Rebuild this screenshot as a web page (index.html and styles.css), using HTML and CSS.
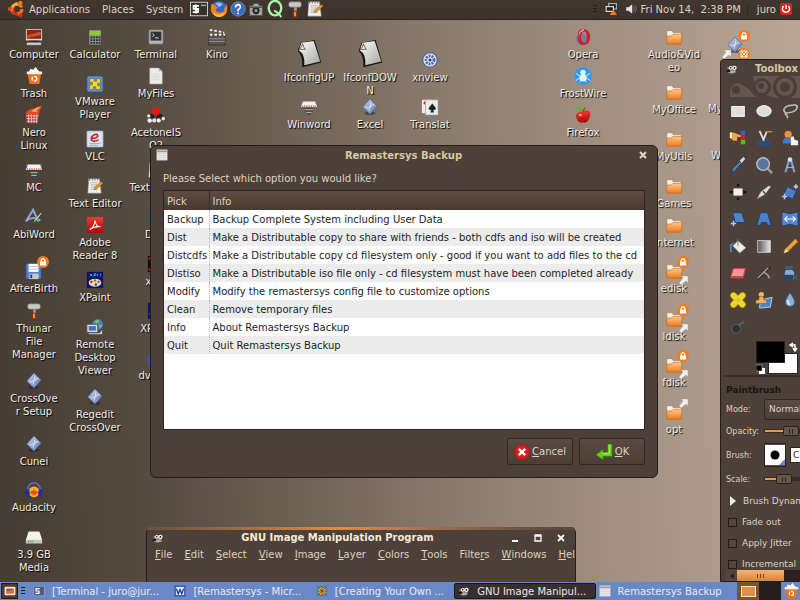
FILE: index.html
```html
<!DOCTYPE html>
<html lang="en">
<head>
<meta charset="utf-8">
<title>Desktop</title>
<link rel="stylesheet" href="styles.css">
</head>
<body>
<svg class="defs" aria-hidden="true">
<defs>
<linearGradient id="g-orange" x1="0" y1="0" x2="0" y2="1"><stop offset="0" stop-color="#ffc98f"/><stop offset="1" stop-color="#ee7a1c"/></linearGradient>
<linearGradient id="g-paper" x1="0" y1="0" x2="1" y2="1"><stop offset="0" stop-color="#fff"/><stop offset="1" stop-color="#a4a4a0"/></linearGradient>
<linearGradient id="g-blue" x1="0" y1="0" x2="1" y2="1"><stop offset="0" stop-color="#c8d8f4"/><stop offset="1" stop-color="#5a76ac"/></linearGradient>
<linearGradient id="g-red" x1="0" y1="0" x2="0" y2="1"><stop offset="0" stop-color="#f03a30"/><stop offset="1" stop-color="#a80808"/></linearGradient>
<linearGradient id="g-grey" x1="0" y1="0" x2="1" y2="0"><stop offset="0" stop-color="#555"/><stop offset="1" stop-color="#e8e8e8"/></linearGradient>
<symbol id="i-computer" viewBox="0 0 20 20"><rect x="1" y="1" width="18" height="13" rx="1" fill="#ddd9d2"/><rect x="2" y="2" width="16" height="10" fill="#8c2410"/><path d="M2 8l16-4v4L2 11z" fill="#c8502c"/><path d="M4 14h12v2H4z" fill="#333"/><rect x="2" y="16" width="16" height="3" fill="#d4d2cc" stroke="#555" stroke-width=".6"/></symbol>
<symbol id="i-trash" viewBox="0 0 20 20"><path d="M4 6l2-4 3 1 3-3 2 3 3 3z" fill="#fff"/><path d="M3 7h15l-2 12H5z" fill="#ee741c"/><path d="M2 5h17v3H2z" fill="#f6efe8"/><circle cx="10.500" cy="13" r="2.600" fill="none" stroke="#fff" stroke-width="1.500" stroke-dasharray="4 1.400"/></symbol>
<symbol id="i-nero" viewBox="0 0 20 20"><path d="M1 8Q5 2 10 3q4-3 9-3-2 3-3 6 0 2-1 5l-2 3H3z" fill="#e8481c"/><path d="M7 6q4-5 10-5-4 3-4 6z" fill="#ffa060"/><path d="M1 9h14l-1 10H2z" fill="#a83838"/><path d="M1 11h14M1.500 14h13M2 17h12M4 9v10M7 9v10M10 9v10M13 9v10" stroke="#f0c8c0" stroke-width="1"/></symbol>
<symbol id="i-press" viewBox="0 0 20 20"><path d="M3 4h14l2 6H1z" fill="#f4f2f0"/><path d="M2 9h16" stroke="#d04030" stroke-width="1.500" stroke-dasharray="1.500 1"/><path d="M2 3v3M18 3v3" stroke="#5078c0" stroke-width="1.500"/><path d="M6 11h8v5l-4 3-4-3z" fill="#444"/><path d="M6 13h8M7 16h6" stroke="#ccc"/></symbol>
<symbol id="i-abi" viewBox="0 0 20 20"><path d="M1 15L9 2l6 13M2 14q7-6 15 0" fill="none" stroke="#88a8d8" stroke-width="2.200"/><path d="M9 17l3-6 7-7-5 9z" fill="#5cb038"/><path d="M11 14l7-8" stroke="#d8f0c0"/></symbol>
<symbol id="i-floppy" viewBox="0 0 20 20"><rect x="1" y="2" width="17" height="17" rx="1" fill="#5484cc" stroke="#284c88"/><rect x="4" y="2" width="11" height="9" fill="#fff"/><path d="M4 5h11M4 8h11" stroke="#aab" stroke-width=".8"/><rect x="5" y="13" width="10" height="6" fill="#c8ccd0"/><rect x="6" y="14" width="2" height="4" fill="#333"/></symbol>
<symbol id="i-hammer" viewBox="0 0 20 20"><rect x="3" y="2" width="14" height="6" rx="2" fill="#c8c8c4" stroke="#666" stroke-width=".7"/><path d="M9 8h3v5H9z" fill="#999"/><path d="M8 12h5v6l-2 2-3-2z" fill="#8c3010"/><path d="M9 13h2v5H9z" fill="#e8a040"/></symbol>
<symbol id="i-crystal" viewBox="0 0 20 20"><ellipse cx="10" cy="17" rx="6" ry="2" fill="#222" opacity=".5"/><path d="M10 1l8 8-8 9-8-8z" fill="url(#g-blue)" stroke="#4a5f90" stroke-width=".7"/><path d="M6 11q5 0 5-6M9 14q0-5 6-7" fill="none" stroke="#eef3fc" stroke-width="1"/></symbol>
<symbol id="i-audacity" viewBox="0 0 20 20"><circle cx="10" cy="12" r="6" fill="#ffb41c"/><path d="M4 13h3l1-1 1 2 1-3 1 3 1-2 1 1h3" stroke="#f04818" stroke-width="2" fill="none"/><path d="M3 12V8q2-6 7-6t7 6v4" fill="none" stroke="#5868c0" stroke-width="2"/><rect x="1" y="9" width="4" height="9" rx="2" fill="#2030a8"/><rect x="15" y="9" width="4" height="9" rx="2" fill="#2030a8"/></symbol>
<symbol id="i-drive" viewBox="0 0 20 20"><path d="M4 4h12l3 9v4H1v-4z" fill="#f4f4f2"/><path d="M1 13h18v4H1z" fill="#c4c4c0"/><path d="M4 14v2M6 14v2M8 14v2" stroke="#58a820"/></symbol>
<symbol id="i-calc" viewBox="0 0 20 20"><rect x="3" y="2" width="14" height="17" rx="1" fill="#8a8c84" stroke="#333" stroke-width=".6"/><rect x="4" y="3" width="12" height="5" fill="#84d030"/><path d="M5 10.500h11M5 13.500h11M5 16.500h11" stroke="#2c302c" stroke-width="2" stroke-dasharray="2 1"/></symbol>
<symbol id="i-vmware" viewBox="0 0 20 20"><rect x="1" y="1" width="18" height="18" rx="2" fill="#5c90d0" stroke="#2c5490"/><path d="M4 4h5v3h3V4h4v5h-3v3h3v4h-5v-3H8v3H4v-5h3V8H4z" fill="#f4d840" stroke="#806010" stroke-width=".7"/></symbol>
<symbol id="i-vlc" viewBox="0 0 20 20"><rect x="1" y="1" width="18" height="18" rx="1" fill="#d4e4f4" stroke="#88a4c4" stroke-width=".7"/><path d="M6 9q5 1 7-2 0-3-3-2-5 2-4 6 2 3 8 0" fill="none" stroke="#d81818" stroke-width="1.700"/><path d="M4 15h12M4 17h9" stroke="#99a8bc"/></symbol>
<symbol id="i-editor" viewBox="0 0 20 20"><path d="M3 2h12l2 16H2z" fill="#f0f0ec" stroke="#888" stroke-width=".6"/><path d="M5 6h8M5 8h9M5 10h7M5 12h7M5 14h8" stroke="#aaa" stroke-width=".8"/><path d="M4 1v3M7 1v3M10 1v3M13 1v3" stroke="#666"/><path d="M9 14l1-3 7-6 2 2-7 6z" fill="#f0941c" stroke="#8c4c10" stroke-width=".5"/></symbol>
<symbol id="i-adobe" viewBox="0 0 20 20"><rect x="1" y="1" width="18" height="18" fill="url(#g-red)"/><path d="M4 15q5-2 6-10 1 7 6 7-7-1-12 3" fill="none" stroke="#fff" stroke-width="1.200"/></symbol>
<symbol id="i-xpaint" viewBox="0 0 20 20"><rect x="1" y="1" width="18" height="18" fill="#10106c"/><path d="M4 3l3 3M7 3L4 6M9 6V3h2v2H9M13 6V3M16 3v3" stroke="#28b8d8" fill="none"/><ellipse cx="10" cy="13" rx="7" ry="4.500" fill="#e8d8a8"/><circle cx="6" cy="12" r="1.300" fill="#d02020"/><circle cx="10" cy="10.500" r="1.300" fill="#30a030"/><circle cx="14" cy="12" r="1.300" fill="#a040c0"/><circle cx="11" cy="15" r="1.300" fill="#2040c0"/></symbol>
<symbol id="i-remote" viewBox="0 0 20 20"><circle cx="13" cy="7" r="6" fill="#4880c8"/><path d="M10 3q4-2 5 1l-4 3zM14 7l4 1-2 4z" fill="#80c060"/><rect x="1" y="7" width="12" height="9" fill="#d8dce4" stroke="#556"/><rect x="3" y="9" width="8" height="5" fill="#4474b8"/><path d="M3 17h12l3-4v5H3z" fill="#c8ccd0"/></symbol>
<symbol id="i-terminal" viewBox="0 0 20 20"><rect x="2" y="2" width="16" height="16" rx="1" fill="#b4b8b0" stroke="#555" stroke-width=".7"/><rect x="4" y="4" width="12" height="10" fill="#2c3438"/><path d="M6 6l2 2-2 2M9 11h4" fill="none" stroke="#e8e8e8"/></symbol>
<symbol id="i-file" viewBox="0 0 20 20"><path d="M3 1h10l4 4v14H3z" fill="#ececea" stroke="#999" stroke-width=".6"/><path d="M13 1v4h4z" fill="#bbb"/><path d="M5 8h9M5 10h9M5 12h9M5 14h9" stroke="#d4d4d2" stroke-width=".8"/></symbol>
<symbol id="i-molecule" viewBox="0 0 20 20"><circle cx="5" cy="12" r="3.500" fill="#222"/><circle cx="14" cy="12" r="3.500" fill="#222"/><circle cx="10" cy="6" r="4.500" fill="#e01818"/><circle cx="3" cy="16" r="2.500" fill="#eee"/><circle cx="8" cy="16" r="2.300" fill="#ddd"/><circle cx="13" cy="16" r="2.300" fill="#eee"/><circle cx="18" cy="14" r="2" fill="#eee"/><circle cx="2" cy="11" r="1.800" fill="#eee"/></symbol>
<symbol id="i-clapper" viewBox="0 0 20 20"><rect x="1" y="8" width="18" height="11" fill="#55534f" stroke="#222" stroke-width=".6"/><path d="M1 12h18M1 15h18" stroke="#99958c"/><path d="M2 7.500h17" stroke="#eee" stroke-width="2" stroke-dasharray="3 2"/><path d="M2 2l16 3" stroke="#eee" stroke-width="2" stroke-dasharray="3 2"/></symbol>
<symbol id="i-sheet" viewBox="0 0 32 32"><path d="M7 4l15-3 7 24-20 5q0-14-5-17z" fill="#151515"/><path d="M8 4l13-2 7 22-17 4q1-12-6-16z" fill="url(#g-paper)"/><path d="M4 11q4 0 5-6 1 4 3 6z" fill="#f4f4f4" stroke="#222" stroke-width=".7"/></symbol>
<symbol id="i-xnview" viewBox="0 0 20 20"><circle cx="10" cy="10" r="8" fill="#dbe2f2" stroke="#3c5498"/><circle cx="10" cy="10" r="4.500" fill="none" stroke="#4a64a8" stroke-width="3" stroke-dasharray="2 1.200"/><circle cx="10" cy="10" r="1.700" fill="#2c4488"/></symbol>
<symbol id="i-cards" viewBox="0 0 20 20"><rect x="1" y="2" width="12" height="15" rx="1" fill="#f6eaea"/><path d="M3 4h2v3H3z" fill="#d82020"/><rect x="5" y="2" width="14" height="17" rx="1" fill="#ececec" stroke="#888" stroke-width=".6"/><path d="M12.500 6l4 5q0 3-3 2l1 3h-4l1-3q-3 1-3-2z" fill="#182420"/></symbol>
<symbol id="i-opera" viewBox="0 0 20 20"><ellipse cx="8" cy="12" rx="6" ry="6" fill="#5c6cb0" opacity=".5"/><path fill-rule="evenodd" d="M11 1q7 1 7 9t-7 9-7-9 7-9zm0 3q-3 1-3 6t3 6 3-6-3-6z" fill="#c02838"/><path d="M11 1q-6 1-6 9 1-6 6-7z" fill="#f0a0a0"/></symbol>
<symbol id="i-frost" viewBox="0 0 20 20"><circle cx="10" cy="10" r="10" fill="#3098f0"/><circle cx="10" cy="6" r="3" fill="#e8f4ff"/><ellipse cx="10" cy="12" rx="4" ry="4" fill="#e8f4ff"/><path d="M2 7l6 4-6 4M18 7l-6 4 6 4M6 17l3-4M14 17l-3-4" fill="none" stroke="#e8f4ff" stroke-width="1"/></symbol>
<symbol id="i-apple" viewBox="0 0 20 20"><path d="M10 6q5-3 8 1 1 6-4 11-4 1-4 0-5 2-7-4-3-8 7-8z" fill="url(#g-red)"/><path d="M10 6Q5 6 3 1q6 0 7 5z" fill="#58b820"/><path d="M10 6l2-4" stroke="#604010"/><ellipse cx="7" cy="10" rx="2" ry="1.500" fill="#ff9a90"/></symbol>
<symbol id="i-folder" viewBox="0 0 20 20"><path d="M2 3h6l1 2h9v12H2z" fill="#f7eee4" stroke="#a87c54" stroke-width=".7"/><path d="M2 9h5l2-2h10l-1 11H2z" fill="url(#g-orange)" stroke="#c4641c" stroke-width=".7"/></symbol>
<symbol id="i-globe" viewBox="0 0 20 20"><circle cx="10" cy="10" r="9" fill="#2c5470"/></symbol>
<symbol id="i-film" viewBox="0 0 20 20"><rect x="1" y="1" width="18" height="18" fill="#180808"/><path d="M2 3l16 14M18 3L2 17" stroke="#d02818" stroke-width="2"/></symbol>
<symbol id="i-dvd" viewBox="0 0 20 20"><path d="M1 9l9-7 9 7v10H1z" fill="#3c50b8"/><path d="M4 12h5M4 15h5" stroke="#fff" stroke-width="2"/></symbol>
<symbol id="i-lock" viewBox="0 0 12 12"><circle cx="6" cy="6" r="6" fill="#f47c20"/><rect x="3" y="5.500" width="6" height="4" fill="#fff"/><path d="M4.200 6V4q1.800-2.600 3.600 0v2" fill="none" stroke="#fff" stroke-width="1.200"/></symbol>
<symbol id="i-link" viewBox="0 0 12 12"><path d="M4 2h7v7L9 7l-5 4-2-2 4-5z" fill="#f4f2ee" stroke="#999" stroke-width=".5"/></symbol>
<symbol id="i-stop" viewBox="0 0 12 12"><circle cx="6" cy="6" r="6" fill="#f47c20"/><path d="M3 3h6v6H3zM3 3l6 6M9 3L3 9" fill="none" stroke="#fff"/></symbol>
<symbol id="i-ubuntu" viewBox="0 0 20 20"><circle cx="11" cy="10" r="5.500" fill="none" stroke="#f07818" stroke-width="3.600" stroke-dasharray="9 2.500"/><path d="M6 8q2-4 6-3.600" fill="none" stroke="#f8b020" stroke-width="3"/><path d="M6 12q2 4 6 3.600" fill="none" stroke="#d83010" stroke-width="3"/><circle cx="3" cy="10" r="2.200" fill="#e84818"/><circle cx="15" cy="3" r="2.200" fill="#f07818"/><circle cx="15" cy="17" r="2.200" fill="#d83010"/></symbol>
<symbol id="i-shell" viewBox="0 0 20 20"><rect x="0" y="2" width="20" height="16" fill="#d8d8d4"/><rect x="1" y="3" width="18" height="14" fill="#35322e"/><path d="M10 6.500H4v3.300h5v3.700H3M6.500 5v10" fill="none" stroke="#fff" stroke-width="2"/><path d="M12 6h6" stroke="#aaa" stroke-width="1.500"/></symbol>
<symbol id="i-fox" viewBox="0 0 20 20"><circle cx="10" cy="10" r="9" fill="#3468c8"/><path d="M6 4q5-3 8 1l-4 3z" fill="#80c8f4"/><path d="M2 4q-3 9 3 13 7 4 12-1 4-5 1-12 0 4-2 5 0 5-5 5-4 0-5-4l3-1-3-3z" fill="#f08418"/><path d="M3 13q6 7 14 0-2 6-8 6-5-1-6-6z" fill="#f8c030"/></symbol>
<symbol id="i-help" viewBox="0 0 20 20"><circle cx="10" cy="10" r="9" fill="#3c6cb8" stroke="#6c90c8"/><path d="M7 8q0-3.500 3-3.500t3 3q0 1.500-3 3.500v2" fill="none" stroke="#fff" stroke-width="2"/><circle cx="10" cy="15.500" r="1.200" fill="#fff"/></symbol>
<symbol id="i-camera" viewBox="0 0 20 20"><path d="M2 6h4l1-3h6l1 3h4v12H2z" fill="#a8a8a0" stroke="#444" stroke-width=".7"/><circle cx="10" cy="12" r="4.500" fill="#282828"/><circle cx="10" cy="12" r="2" fill="#8898a0"/><rect x="2" y="7" width="16" height="1.500" fill="#444"/></symbol>
<symbol id="i-ring" viewBox="0 0 20 20"><ellipse cx="10" cy="9" rx="7" ry="8" fill="none" stroke="#a8f4a8" stroke-width="2.600"/><path d="M9 12q4 1 8 7" fill="none" stroke="#a8f4a8" stroke-width="2.200"/></symbol>
<symbol id="i-net" viewBox="0 0 20 20"><rect x="5" y="0" width="15" height="11" fill="#a8a8a4"/><rect x="7" y="2" width="11" height="7" fill="#222"/><rect x="1" y="5" width="14" height="10" fill="#d8d8d4"/><rect x="3" y="7" width="10" height="6" fill="#222"/><path d="M14 11l6 9H8z" fill="#f47c20"/></symbol>
<symbol id="i-sound" viewBox="0 0 20 20"><path d="M2 7h4l6-5v16l-6-5H2z" fill="#e4e2de"/><path d="M14 6q3 4 0 8M17 4q4 6 0 12" fill="none" stroke="#777" stroke-width="1.500"/></symbol>
<symbol id="i-power" viewBox="0 0 20 20"><rect width="20" height="20" rx="3" fill="#dc2020"/><path d="M6 5q-4 5 0 9 4 3 8 0 4-4 0-9M10 3v7" fill="none" stroke="#fff" stroke-width="2.400"/></symbol>
<symbol id="i-list" viewBox="0 0 20 20"><rect x="1" y="1" width="18" height="18" fill="#eee"/><path d="M1 4h18" stroke="#999" stroke-width="3"/><path d="M2 8h16M2 11h16M2 14h16M2 17h16" stroke="#c8c8c8"/></symbol>
<symbol id="i-wilber" viewBox="0 0 20 20"><path d="M3 6l4 2q5-3 11-2-1 11-8 12-7 0-8-5z" fill="#8c8880"/><circle cx="8" cy="8" r="3" fill="#fff"/><circle cx="14" cy="8" r="3.500" fill="#fff"/><circle cx="8" cy="8" r="1.300"/><circle cx="14" cy="8" r="1.500"/><ellipse cx="4" cy="13" rx="3" ry="2" fill="#111"/><path d="M7 15h9" stroke="#ddd" stroke-width="1.500"/></symbol>
<symbol id="i-cancel" viewBox="0 0 20 20"><path d="M6 1h8l5 5v8l-5 5H6l-5-5V6z" fill="#dc1c1c" stroke="#901010" stroke-width=".6"/><path d="M6 6l8 8M14 6l-8 8" stroke="#fff" stroke-width="3"/></symbol>
<symbol id="i-ok" viewBox="0 0 20 20"><path d="M14 1h5v14H9v4l-8-6 8-6v3h5z" fill="#6cc81c" stroke="#2c7808" stroke-width=".8"/><path d="M16 2v10H8" fill="none" stroke="#b8f070" stroke-width="1"/></symbol>
<symbol id="i-word" viewBox="0 0 20 20"><rect x="1" y="1" width="18" height="18" fill="#2848a8"/><rect x="3" y="3" width="14" height="14" fill="#e0e8fc"/><path d="M4 6l3 9 3-7 3 7 3-9" fill="none" stroke="#2038a0" stroke-width="2.200"/></symbol>
<symbol id="i-web" viewBox="0 0 20 20"><rect x="1" y="1" width="18" height="18" rx="2" fill="#5888a8"/><circle cx="10" cy="10" r="6" fill="#e0c040"/><path d="M3 3l14 14M17 3L3 17M10 2v16M2 10h16" stroke="#8c3818" stroke-width="1.400"/></symbol>
<symbol id="i-task-term" viewBox="0 0 20 20"><rect x="1" y="2" width="18" height="16" fill="#4c5c80"/><rect x="1" y="2" width="18" height="16" fill="none" stroke="#90a0c4" stroke-width="1.500"/><path d="M11 6H5v4h5v4H4" fill="none" stroke="#fff" stroke-width="2"/></symbol>
<symbol id="i-screen" viewBox="0 0 20 20"><rect x="1" y="3" width="18" height="14" rx="1" fill="#f4e8dc"/><rect x="4" y="6" width="12" height="8" fill="#a84820"/><path d="M4 11l12-4v7H4z" fill="#d8703c"/></symbol>
<symbol id="t-rect" viewBox="0 0 20 20"><rect x="3" y="5" width="14" height="11" fill="#dededa" stroke="#fff"/></symbol>
<symbol id="t-ellipse" viewBox="0 0 20 20"><ellipse cx="10" cy="10" rx="8" ry="6" fill="#dededa" stroke="#fff"/></symbol>
<symbol id="t-lasso" viewBox="0 0 20 20"><path d="M5 12q-5-5 4-8 10-2 9 2-1 5-10 6-4 0-3 2 3 1 2 4" fill="none" stroke="#b8c0bc" stroke-width="1.800"/></symbol>
<symbol id="t-color" viewBox="0 0 20 20"><rect x="13" y="2" width="5" height="5" fill="#2868d0"/><rect x="13" y="7" width="5" height="5" fill="#e01818"/><rect x="13" y="12" width="5" height="5" fill="#40c818"/><path d="M1 4h4l8 3v2H9v4H5L1 10z" fill="#f4a44c"/><path d="M1 4h2v6H1z" fill="#fff"/></symbol>
<symbol id="t-scissors" viewBox="0 0 20 20"><path d="M5 2l5 11M13 3l-4 10" stroke="#dde" stroke-width="2"/><path d="M12 3h7" stroke="#c08830" stroke-width="1.500"/><circle cx="6" cy="16" r="2.300" fill="none" stroke="#2050a0" stroke-width="1.800"/><circle cx="13" cy="16" r="2.300" fill="none" stroke="#2050a0" stroke-width="1.800"/></symbol>
<symbol id="t-fore" viewBox="0 0 20 20"><circle cx="8" cy="6" r="4" fill="#f0903c"/><path d="M2 16q0-7 6-7t6 7z" fill="#4878c0"/><path d="M11 18V9l3-1 1 4 4 1v5z" fill="#f4f4f4"/></symbol>
<symbol id="t-picker" viewBox="0 0 20 20"><path d="M3 19l1-5 8-8 2 2-7 8z" fill="#5080c0" stroke="#182c50" stroke-width=".7"/><path d="M12 5l4-4 2 2-4 5z" fill="#c8d8ec"/></symbol>
<symbol id="t-zoom" viewBox="0 0 20 20"><path d="M14 14l5 5" stroke="#999" stroke-width="3"/><circle cx="9" cy="9" r="7" fill="#5874a0" stroke="#b8bcc0" stroke-width="1.600"/></symbol>
<symbol id="t-measure" viewBox="0 0 20 20"><path d="M9 4L5 18M11 4l4 14" stroke="#7c9cc8" stroke-width="2.500"/><circle cx="10" cy="4" r="2.500" fill="#dde"/><path d="M6 12q4 2 8 0" stroke="#bcd" fill="none"/></symbol>
<symbol id="t-move" viewBox="0 0 20 20"><rect x="5" y="6" width="10" height="8" fill="#f0f0ee"/><path d="M10 1v3M10 16v3M1 10h3M16 10h3" stroke="#111" stroke-width="2.500"/></symbol>
<symbol id="t-crop" viewBox="0 0 20 20"><path d="M2 18L6 10l9-7 3 1-7 9z" fill="#dcdcd8" stroke="#555" stroke-width=".7"/><path d="M9 9l3 4" stroke="#444" stroke-width="1.500"/></symbol>
<symbol id="t-rotate" viewBox="0 0 20 20"><path d="M7 4l10 5-4 9-10-5z" fill="#4c80c4" stroke="#1c3c74"/><path d="M14 4h5M16.500 1.500v5M1 15h6M4 12v6" fill="none" stroke="#b0ccf0" stroke-width="1.800"/></symbol>
<symbol id="t-shear" viewBox="0 0 20 20"><path d="M4 3h10l4 11H7z" fill="#5084c8" stroke="#1c3c74"/><path d="M5 12v6M2 15h6" stroke="#a8c8f0" stroke-width="1.700"/></symbol>
<symbol id="t-persp" viewBox="0 0 20 20"><path d="M6 3h8l4 14h-4l-1-3H7l-1 3H2z" fill="#4c80c4" stroke="#1c3c74"/></symbol>
<symbol id="t-flip" viewBox="0 0 20 20"><path d="M1 2l8 2h2l8-2v16l-8-2H9l-8 2z" fill="#5488cc" stroke="#1c3c74"/><path d="M4 10h12M7 7l-3 3 3 3M13 7l3 3-3 3" stroke="#fff" fill="none" stroke-width="1.300"/></symbol>
<symbol id="t-bucket" viewBox="0 0 20 20"><path d="M10 4l9 8-7 6-8-8z" fill="#ecebe8" stroke="#555" stroke-width=".6"/><path d="M10 2v8" stroke="#777"/><path d="M1 8l6-2-4 4v7H1z" fill="#5080c4"/></symbol>
<symbol id="t-blend" viewBox="0 0 20 20"><rect x="3" y="4" width="14" height="13" fill="url(#g-grey)" stroke="#ccc"/></symbol>
<symbol id="t-pencil" viewBox="0 0 20 20"><path d="M3 18l2-5L16 2l3 3L8 16z" fill="#f0a038" stroke="#94541c" stroke-width=".6"/><path d="M3 18l2-5 3 3z" fill="#f4dcb4"/></symbol>
<symbol id="t-eraser" viewBox="0 0 20 20"><path d="M5 5h13l-2 9H2z" fill="#f09494" stroke="#d8404c"/><path d="M2 14h14v2H2z" fill="#c84450"/></symbol>
<symbol id="t-air" viewBox="0 0 20 20"><path d="M3 17L17 3" stroke="#222" stroke-width="2"/><path d="M3 16L15 4M9 9q6 2 7 7" stroke="#a8b4b4" stroke-width="1.300" fill="none"/></symbol>
<symbol id="t-ink" viewBox="0 0 20 20"><rect x="5" y="2" width="8" height="4" fill="#3c5c8c"/><path d="M4 8l2-2h6l3 3v8H3z" fill="#8ca8cc" stroke="#333" stroke-width=".7"/><path d="M3 12h11v5H3z" fill="#24446c"/><path d="M13 18l6-6M13 13l6 5" stroke="#4c6c9c"/></symbol>
<symbol id="t-heal" viewBox="0 0 20 20"><path d="M5 5l10 10M15 5L5 15" stroke="#a89010" stroke-width="7.500" stroke-linecap="round"/><path d="M5 5l10 10M15 5L5 15" stroke="#f0d828" stroke-width="6" stroke-linecap="round"/><path d="M7 10h6M10 7v6" stroke="#b89c10" stroke-dasharray="1 1"/></symbol>
<symbol id="t-clone" viewBox="0 0 20 20"><path d="M6 10l13-3-2 11-12 1z" fill="#4c84cc" stroke="#c0d4ec"/><circle cx="7" cy="4" r="3" fill="#f0b464"/><path d="M5 6h4l1 4h3v4H1v-4h3z" fill="#e8b070" stroke="#80501c" stroke-width=".6"/></symbol>
<symbol id="t-blur" viewBox="0 0 20 20"><path d="M10 2q5 7 5 10 0 5-5 5t-5-5q0-3 5-10z" fill="#88b0dc" stroke="#3c6090"/><path d="M8 10q-1 4 2 5" stroke="#fff" fill="none" stroke-width="1.500"/></symbol>
<symbol id="t-dodge" viewBox="0 0 20 20"><circle cx="8" cy="12" r="5" fill="#2c3438" stroke="#5c6864"/><path d="M11 8l6-4" stroke="#5c6864" stroke-width="1.800"/></symbol>
</defs>
</svg>

<header class="panel">
  <nav class="panel-menus">
    <button class="menu-btn"><svg class="ic18"><use href="#i-ubuntu"/></svg>Applications</button>
    <button class="menu-btn">Places</button>
    <button class="menu-btn">System</button>
  </nav>
  <div class="quick">
    <button aria-label="Root terminal"><svg class="ic18"><use href="#i-shell"/></svg></button>
    <button aria-label="Web browser"><svg class="ic18"><use href="#i-fox"/></svg></button>
    <button aria-label="Help"><svg class="ic16"><use href="#i-help"/></svg></button>
    <button aria-label="Camera"><svg class="ic16"><use href="#i-camera"/></svg></button>
    <button aria-label="Search"><svg class="ic18"><use href="#i-ring"/></svg></button>
    <button aria-label="Tools"><svg class="ic18"><use href="#i-hammer"/></svg></button>
    <button aria-label="Editor"><svg class="ic18"><use href="#i-editor"/></svg></button>
  </div>
  <div class="tray">
    <span class="grip"></span>
    <button aria-label="Network"><svg class="ic12"><use href="#i-net"/></svg></button>
    <button aria-label="Volume"><svg class="ic12"><use href="#i-sound"/></svg></button>
    <time class="clock">Fri Nov 14,&nbsp; 2:38 PM</time>
    <button class="user">juro <svg class="ic12"><use href="#i-power"/></svg></button>
  </div>
</header>

<main class="desktop">
  <a href="#" class="launcher c1 y7"><svg><use href="#i-computer"/></svg><span>Computer</span></a>
  <a href="#" class="launcher c1 y46"><svg><use href="#i-trash"/></svg><span>Trash</span></a>
  <a href="#" class="launcher c1 y85"><svg><use href="#i-nero"/></svg><span>Nero<br>Linux</span></a>
  <a href="#" class="launcher c1 y140"><svg><use href="#i-press"/></svg><span>MC</span></a>
  <a href="#" class="launcher c1 y187"><svg><use href="#i-abi"/></svg><span>AbiWord</span></a>
  <a href="#" class="launcher c1 y242"><svg><use href="#i-floppy"/></svg><svg class="emblem"><use href="#i-lock"/></svg><span>AfterBirth</span></a>
  <a href="#" class="launcher c1 y281"><svg><use href="#i-hammer"/></svg><span>Thunar<br>File<br>Manager</span></a>
  <a href="#" class="launcher c1 y351"><svg><use href="#i-crystal"/></svg><span>CrossOve<br>r Setup</span></a>
  <a href="#" class="launcher c1 y414"><svg><use href="#i-crystal"/></svg><span>Cunei</span></a>
  <a href="#" class="launcher c1 y460"><svg><use href="#i-audacity"/></svg><span>Audacity</span></a>
  <a href="#" class="launcher c1 y507"><svg><use href="#i-drive"/></svg><span>3.9 GB<br>Media</span></a>

  <a href="#" class="launcher c2 y7"><svg><use href="#i-calc"/></svg><span>Calculator</span></a>
  <a href="#" class="launcher c2 y54"><svg><use href="#i-vmware"/></svg><span>VMware<br>Player</span></a>
  <a href="#" class="launcher c2 y109"><svg><use href="#i-vlc"/></svg><span>VLC</span></a>
  <a href="#" class="launcher c2 y156"><svg><use href="#i-editor"/></svg><span>Text Editor</span></a>
  <a href="#" class="launcher c2 y195"><svg><use href="#i-adobe"/></svg><span>Adobe<br>Reader 8</span></a>
  <a href="#" class="launcher c2 y250"><svg><use href="#i-xpaint"/></svg><span>XPaint</span></a>
  <a href="#" class="launcher c2 y297"><svg><use href="#i-remote"/></svg><span>Remote<br>Desktop<br>Viewer</span></a>
  <a href="#" class="launcher c2 y367"><svg><use href="#i-crystal"/></svg><span>Regedit<br>CrossOver</span></a>

  <a href="#" class="launcher c3 y7"><svg><use href="#i-terminal"/></svg><span>Terminal</span></a>
  <a href="#" class="launcher c3 y46"><svg><use href="#i-file"/></svg><span>MyFiles</span></a>
  <a href="#" class="launcher c3 y85"><svg><use href="#i-molecule"/></svg><span>AcetoneIS<br>O2</span></a>
  <a href="#" class="launcher c3 y140"><svg><use href="#i-editor"/></svg><span>Text Editor</span></a>
  <a href="#" class="launcher c3 y187"><svg><use href="#i-globe"/></svg><span>DVD</span></a>
  <a href="#" class="launcher c3 y234"><svg><use href="#i-film"/></svg><span>xine</span></a>
  <a href="#" class="launcher c3 y281"><svg><use href="#i-xpaint"/></svg><span>XPaint</span></a>
  <a href="#" class="launcher c3 y328"><svg><use href="#i-dvd"/></svg><span>dvd:rip</span></a>

  <a href="#" class="launcher c4 y7"><svg><use href="#i-clapper"/></svg><span>Kino</span></a>
  <a href="#" class="launcher large c5 y19"><svg><use href="#i-sheet"/></svg><span>IfconfigUP</span></a>
  <a href="#" class="launcher c5 y77"><svg><use href="#i-press"/></svg><span>Winword</span></a>
  <a href="#" class="launcher large c6 y19"><svg><use href="#i-sheet"/></svg><span>IfconfDOW<br>N</span></a>
  <a href="#" class="launcher c6 y77"><svg><use href="#i-crystal"/></svg><span>Excel</span></a>
  <a href="#" class="launcher c7 y31"><svg><use href="#i-xnview"/></svg><span>xnview</span></a>
  <a href="#" class="launcher c7 y77"><svg><use href="#i-cards"/></svg><span>Translat</span></a>

  <a href="#" class="launcher c8 y7"><svg><use href="#i-opera"/></svg><span>Opera</span></a>
  <a href="#" class="launcher c8 y46"><svg><use href="#i-frost"/></svg><span>FrostWire</span></a>
  <a href="#" class="launcher c8 y85"><svg><use href="#i-apple"/></svg><span>Firefox</span></a>

  <a href="#" class="launcher c9 y7"><svg><use href="#i-folder"/></svg><span>Audio&amp;Vid<br>eo</span></a>
  <a href="#" class="launcher c9 y62"><svg><use href="#i-folder"/></svg><span>MyOffice</span></a>
  <a href="#" class="launcher c9 y109"><svg><use href="#i-folder"/></svg><span>MyUtils</span></a>
  <a href="#" class="launcher c9 y156"><svg><use href="#i-folder"/></svg><span>Games</span></a>
  <a href="#" class="launcher c9 y195"><svg><use href="#i-folder"/></svg><span>Internet</span></a>
  <a href="#" class="launcher c9 y242"><svg><use href="#i-folder"/></svg><svg class="emblem"><use href="#i-lock"/></svg><svg class="emblem low"><use href="#i-link"/></svg><span>edisk</span></a>
  <a href="#" class="launcher c9 y289"><svg><use href="#i-folder"/></svg><svg class="emblem"><use href="#i-lock"/></svg><svg class="emblem low"><use href="#i-link"/></svg><span>ldisk</span></a>
  <a href="#" class="launcher c9 y335"><svg><use href="#i-folder"/></svg><svg class="emblem"><use href="#i-lock"/></svg><svg class="emblem low"><use href="#i-link"/></svg><span>fdisk</span></a>
  <a href="#" class="launcher c9 y382"><svg><use href="#i-folder"/></svg><svg class="emblem"><use href="#i-link"/></svg><span>opt</span></a>

  <a href="#" class="launcher c10 y15" aria-label="Shortcut"><svg><use href="#i-crystal"/></svg><svg class="emblem"><use href="#i-lock"/></svg><svg class="emblem low"><use href="#i-stop"/></svg><svg class="emblem low left"><use href="#i-link"/></svg></a>
  <a href="#" class="launcher c10 y62"><span class="bare">MyPictures</span></a>
  <a href="#" class="launcher c10 y109"><span class="bare">Wireless2</span></a>

  <section class="window gimp">
    <div class="titlebar">
      <svg class="ic12"><use href="#i-wilber"/></svg>
      <h2>GNU Image Manipulation Program</h2>
      <button aria-label="Minimize"><svg class="ic8" viewBox="0 0 8 8"><path d="M1 7h6" stroke="#fff" stroke-width="2"/></svg></button>
      <button aria-label="Maximize"><svg class="ic8" viewBox="0 0 8 8"><path d="M1 1h6v6H1zM1 2h6" fill="none" stroke="#fff" stroke-width="1.300"/></svg></button>
      <button aria-label="Close"><svg class="ic8" viewBox="0 0 8 8"><path d="M1 1l6 6M7 1L1 7" stroke="#fff" stroke-width="1.800"/></svg></button>
    </div>
    <nav class="menubar">
      <button><u>F</u>ile</button><button><u>E</u>dit</button><button><u>S</u>elect</button><button><u>V</u>iew</button><button><u>I</u>mage</button><button><u>L</u>ayer</button><button><u>C</u>olors</button><button><u>T</u>ools</button><button>Filte<u>r</u>s</button><button><u>W</u>indows</button><button><u>H</u>el</button>
    </nav>
  </section>

  <section class="window toolbox">
    <div class="titlebar"><svg class="ic12"><use href="#i-wilber"/></svg><h2>Toolbox</h2></div>
    <svg class="mascot" viewBox="0 0 80 22"><path fill="#62564e" d="M1 21q-1-14 9-14l10 6q3 5 8 8zM24 0h56v22H50q-14-2-20-8-5-6-6-14z"/><circle cx="7" cy="14" r="4" fill="#4a3e37"/><circle cx="33" cy="11" r="9" fill="#4a3e37"/><circle cx="33" cy="11" r="6" fill="#62564e"/><circle cx="32" cy="10" r="3" fill="#4a3e37"/><circle cx="56" cy="11" r="12" fill="#4a3e37"/><circle cx="56" cy="11" r="9" fill="#62564e"/><circle cx="56" cy="11" r="5" fill="#4a3e37"/></svg>
    <div class="tools">
      <button aria-label="Rectangle Select"><svg><use href="#t-rect"/></svg></button>
      <button aria-label="Ellipse Select"><svg><use href="#t-ellipse"/></svg></button>
      <button aria-label="Free Select"><svg><use href="#t-lasso"/></svg></button>
      <button aria-label="Select by Color"><svg><use href="#t-color"/></svg></button>
      <button aria-label="Scissors"><svg><use href="#t-scissors"/></svg></button>
      <button aria-label="Foreground Select"><svg><use href="#t-fore"/></svg></button>
      <button aria-label="Color Picker"><svg><use href="#t-picker"/></svg></button>
      <button aria-label="Zoom"><svg><use href="#t-zoom"/></svg></button>
      <button aria-label="Measure"><svg><use href="#t-measure"/></svg></button>
      <button aria-label="Move"><svg><use href="#t-move"/></svg></button>
      <button aria-label="Crop"><svg><use href="#t-crop"/></svg></button>
      <button aria-label="Rotate"><svg><use href="#t-rotate"/></svg></button>
      <button aria-label="Shear"><svg><use href="#t-shear"/></svg></button>
      <button aria-label="Perspective"><svg><use href="#t-persp"/></svg></button>
      <button aria-label="Flip"><svg><use href="#t-flip"/></svg></button>
      <button aria-label="Bucket Fill"><svg><use href="#t-bucket"/></svg></button>
      <button aria-label="Blend"><svg><use href="#t-blend"/></svg></button>
      <button aria-label="Pencil"><svg><use href="#t-pencil"/></svg></button>
      <button aria-label="Eraser"><svg><use href="#t-eraser"/></svg></button>
      <button aria-label="Airbrush"><svg><use href="#t-air"/></svg></button>
      <button aria-label="Ink"><svg><use href="#t-ink"/></svg></button>
      <button aria-label="Heal"><svg><use href="#t-heal"/></svg></button>
      <button aria-label="Clone"><svg><use href="#t-clone"/></svg></button>
      <button aria-label="Blur"><svg><use href="#t-blur"/></svg></button>
      <button aria-label="Dodge"><svg><use href="#t-dodge"/></svg></button>
    </div>
    <button class="colours" aria-label="Foreground and background colours"><svg viewBox="0 0 44 34"><rect x="12.500" y="12.500" width="29" height="20" fill="#fff" stroke="#222"/><rect x=".5" y=".5" width="28" height="21" fill="#000" stroke="#222"/><rect x="3" y="27" width="6" height="6" fill="#fff"/><rect x="0" y="24" width="6" height="6" fill="#000" stroke="#ccc" stroke-width=".5"/><path d="M35 4h4v5M37 2l-3 2 3 2M37 7l2 3 2-3" fill="none" stroke="#fff" stroke-width="1.500"/></svg></button>
    <h3>Paintbrush</h3>
    <div class="options">
      <div class="opt"><label for="mode">Mode:</label><select id="mode"><option>Normal</option></select></div>
      <div class="opt"><label for="opacity">Opacity:</label><input type="range" id="opacity" min="0" max="100" value="43"></div>
      <div class="opt brush"><label for="brush">Brush:</label><button class="brush-btn" aria-label="Choose brush"><svg viewBox="0 0 20 20"><rect width="20" height="20" fill="#fff"/><circle cx="10" cy="10" r="4.500"/><path d="M20 14v6h-6z" fill="#6c84e8"/></svg></button><input type="text" id="brush" value="Circle (11)"></div>
      <div class="opt"><label for="scale">Scale:</label><input type="range" id="scale" min="0" max="100" value="27"></div>
      <button class="expander">Brush Dynamics</button>
      <label class="check"><input type="checkbox">Fade out</label>
      <label class="check"><input type="checkbox">Apply Jitter</label>
      <label class="check"><input type="checkbox">Incremental</label>
    </div>
    <div class="hscroll"><button aria-label="Scroll left"></button><span class="thumb"></span></div>
  </section>

  <section class="window dialog" role="dialog" aria-labelledby="dlg-title">
    <div class="titlebar">
      <svg class="ic12"><use href="#i-list"/></svg>
      <h2 id="dlg-title">Remastersys Backup</h2>
      <button aria-label="Close"><svg class="ic8" viewBox="0 0 8 8"><path d="M1 1l6 6M7 1L1 7" stroke="#e8dccb" stroke-width="1.800"/></svg></button>
    </div>
    <div class="dialog-body">
      <p>Please Select which option you would like?</p>
      <div class="pane">
        <table>
          <thead><tr><th>Pick</th><th>Info</th></tr></thead>
          <tbody>
            <tr><td>Backup</td><td>Backup Complete System including User Data</td></tr>
            <tr><td>Dist</td><td>Make a Distributable copy to share with friends - both cdfs and iso will be created</td></tr>
            <tr><td>Distcdfs</td><td>Make a Distributable copy cd filesystem only - good if you want to add files to the cd</td></tr>
            <tr><td>Distiso</td><td>Make a Distributable iso file only - cd filesystem must have been completed already</td></tr>
            <tr><td>Modify</td><td>Modify the remastersys config file to customize options</td></tr>
            <tr><td>Clean</td><td>Remove temporary files</td></tr>
            <tr><td>Info</td><td>About Remastersys Backup</td></tr>
            <tr><td>Quit</td><td>Quit Remastersys Backup</td></tr>
          </tbody>
        </table>
      </div>
      <div class="actions">
        <button><svg class="ic16"><use href="#i-cancel"/></svg><span><u>C</u>ancel</span></button>
        <button class="ok"><svg class="ic18"><use href="#i-ok"/></svg><span><u>O</u>K</span></button>
      </div>
    </div>
  </section>
</main>

<footer class="taskbar">
  <button class="show-desktop" aria-label="Show desktop"><svg class="ic12"><use href="#i-screen"/></svg></button>
  <span class="grip"></span>
  <div class="tasks">
    <button class="task"><svg class="ic12"><use href="#i-task-term"/></svg>[Terminal - juro@jur...</button>
    <button class="task"><svg class="ic12"><use href="#i-word"/></svg>[Remastersys - Micr...</button>
    <button class="task"><svg class="ic12"><use href="#i-web"/></svg>[Creating Your Own ...</button>
    <button class="task active"><svg class="ic12"><use href="#i-wilber"/></svg>GNU Image Manipul...</button>
    <button class="task"><svg class="ic12"><use href="#i-list"/></svg>Remastersys Backup</button>
  </div>
  <div class="pager"><button class="current" aria-label="Workspace 1"><span></span></button><button aria-label="Workspace 2"></button></div>
  <button class="bin" aria-label="Trash"><svg class="ic16"><use href="#i-trash"/></svg></button>
</footer>
</body>
</html>
```
FILE: styles.css
```css
* { box-sizing: border-box; }

body {
  margin: 0;
  height: 100vh;
  display: flex;
  flex-direction: column;
  overflow: hidden;
  font: 10px/13px "DejaVu Sans", sans-serif;
  color: #ddd2c0;
  background: #4c4038;
}

button {
  margin: 0;
  padding: 0;
  border: 0;
  background: none;
  color: inherit;
  font: inherit;
  display: flex;
  align-items: center;
  white-space: nowrap;
}

h2, h3, p { margin: 0; font-size: 10px; }
svg { display: block; flex: none; }

.defs { position: absolute; width: 0; height: 0; }
.ic8 { width: 8px; height: 8px; }
.ic12 { width: 12px; height: 12px; }
.ic16 { width: 16px; height: 16px; }
.ic18 { width: 18px; height: 18px; }

/* Top panel */
.panel {
  flex: none;
  height: 20px;
  display: flex;
  align-items: center;
  padding: 0 8px 1px 7px;
  background: linear-gradient(#413630, #3c312b);
  border-bottom: 1px solid #2c2420;
}
.panel-menus { display: flex; gap: 12px; }
.menu-btn { gap: 4px; }
.quick { display: flex; align-items: center; gap: 2px; margin-left: 7px; }
.tray { display: flex; align-items: center; gap: 8px; margin-left: auto; }
.clock { margin-left: -4px; }
.user { gap: 4px; margin-left: -2px; padding-left: 9px; border-left: 1px solid #342a25; }
.tray .clock { padding-right: 0; }
.grip {
  flex: none;
  width: 4px;
  height: 9px;
  background: repeating-linear-gradient(#241d19 0 1px, transparent 1px 3px);
}

/* Desktop */
.desktop {
  flex: 1;
  position: relative;
  overflow: hidden;
  background: linear-gradient(88deg, #463c33 0%, #564b41 19%, #6a5e52 34%, #8a7b6d 56%, #a08f80 74%, #ad9c8c 88%, #b9a695 100%);
}
.launcher {
  position: absolute;
  width: 64px;
  display: flex;
  flex-direction: column;
  align-items: center;
  gap: 1px;
  color: #f0ece6;
  text-align: center;
  text-decoration: none;
  text-shadow: 1px 1px 1px #000;
}
.launcher svg { width: 20px; height: 20px; padding: 1px; }
.launcher.large svg { width: 32px; height: 32px; }
.launcher .emblem { position: absolute; left: 35px; top: -5px; width: 12px; height: 12px; padding: 0; }
.launcher .emblem.low { top: 13px; }
.launcher .emblem.left { left: 17px; }
.bare { padding-top: 20px; }

.c1 { left: 2px; }
.c2 { left: 63px; }
.c3 { left: 124px; }
.c4 { left: 185px; }
.c5 { left: 277px; }
.c6 { left: 338px; }
.c7 { left: 398px; }
.c8 { left: 551px; }
.c9 { left: 642px; }
.c10 { left: 703px; }

.y7 { top: 7px; }
.y15 { top: 15px; }
.y19 { top: 18px; }
.y31 { top: 30px; }
.y46 { top: 46px; }
.y54 { top: 54px; }
.y62 { top: 62px; }
.y77 { top: 77px; }
.y85 { top: 85px; }
.y109 { top: 109px; }
.y140 { top: 140px; }
.y156 { top: 156px; }
.y187 { top: 187px; }
.y195 { top: 195px; }
.y234 { top: 234px; }
.y242 { top: 241px; }
.y250 { top: 250px; }
.y281 { top: 281px; }
.y289 { top: 289px; }
.y297 { top: 297px; }
.y328 { top: 328px; }
.y335 { top: 335px; }
.y351 { top: 351px; }
.y367 { top: 367px; }
.y382 { top: 382px; }
.y414 { top: 414px; }
.y460 { top: 460px; }
.y507 { top: 507px; }

/* Windows */
.window {
  position: absolute;
  background: #4c4038;
  border: 1px solid #241c18;
  border-radius: 6px 6px 0 0;
}
.titlebar { display: flex; align-items: center; height: 18px; padding: 0 10px 0 5px; }
.titlebar h2 { flex: 1; text-align: center; color: #d9c7a3; }

.dialog { left: 150px; top: 125px; width: 508px; border-radius: 6px; }
.dialog-body { padding: 8px 12px 12px; }
.pane { margin-top: 5px; min-height: 240px; background: #fff; border: 1px solid #2e2520; }
table { width: 100%; border-collapse: collapse; color: #1c1c1c; }
th, td { height: 18px; padding: 1px 3px 0; line-height: 17px; text-align: left; font-weight: normal; white-space: nowrap; }
th { height: 19px; background: linear-gradient(#5e4c42, #49392f); color: #ddd2c0; }
th:first-child, td:first-child { width: 45px; padding-right: 1px; }
th:first-child { border-right: 1px solid #3a2d26; }
td:first-child { border-right: 1px dotted #b8b8b8; }
tbody tr:nth-child(even) { background: #ececec; }
.actions { display: flex; justify-content: flex-end; gap: 6px; margin-top: 8px; }
.actions button {
  width: 66px;
  height: 27px;
  justify-content: center;
  gap: 2px;
  border: 1px solid #33281f;
  border-radius: 2px;
  background: linear-gradient(#5a4a41, #4c3e36);
}

.gimp { left: 146px; top: 507px; width: 430px; height: 80px; border-top: 0; }
.gimp::before {
  content: "";
  display: block;
  height: 3px;
  border-radius: 6px 6px 0 0;
  background: linear-gradient(90deg, #6a5040, #e08c40 45%, #c08050 55%, #5a4a40 95%);
}
.gimp .titlebar { height: 15px; gap: 15px; }
.gimp h2 { color: #f6ecd8; }
.menubar { display: flex; gap: 12px; padding: 3px 3px 0 8px; }

/* Toolbox extends past the right edge of the desktop */
.toolbox { right: -32px; top: 39px; bottom: 0; width: 112px; border-radius: 4px 0 0 0; display: flex; flex-direction: column; font-size: 9px; }
.toolbox .titlebar { height: 17px; padding-right: 16px; }
.mascot { width: 80px; height: 22px; margin-left: 8px; margin-top: -1px; }
.tools { display: grid; grid-template-columns: repeat(3, 26px); grid-auto-rows: 27px; padding-left: 4px; margin-top: -1px; }
.tools button { justify-content: center; }
.tools svg { width: 18px; height: 18px; }
.colours { margin: 1px 0 0 35px; }
.colours svg { width: 44px; height: 34px; }
.toolbox h3 { margin: 0 0 0 4px; padding: 8px 0 2px 1px; border-top: 2px solid #372c26; font-size: 9px; line-height: 11px; color: #1c1512; }
.options { flex: 1; min-height: 0; overflow: hidden; padding-left: 5px; }
.opt { display: flex; align-items: center; height: 22px; font-size: 8px; }
.opt.brush { height: 26px; }
.opt label { width: 38px; flex: none; }
select {
  appearance: none;
  width: 64px;
  height: 21px;
  padding: 0 4px;
  font: 9px "DejaVu Sans", sans-serif;
  color: #ddd2c0;
  background: linear-gradient(#5a4a41, #4c3e36);
  border: 1px solid #33281f;
  border-radius: 2px;
}
input[type="range"] { appearance: none; width: 60px; height: 12px; margin: 0; background: none; }
input[type="range"]::-webkit-slider-runnable-track { height: 4px; background: linear-gradient(90deg, #e89848 40%, #352a24 40%); border: 1px solid #3a2c22; }
input[type="range"]::-webkit-slider-thumb {
  appearance: none;
  width: 16px;
  height: 10px;
  margin-top: -4px;
  border: 1px solid #2c221c;
  border-radius: 2px;
  background: repeating-linear-gradient(90deg, transparent 0 2px, #33281f 2px 3px) center / 8px 5px no-repeat #65554a;
}
.brush-btn { width: 24px; height: 24px; justify-content: center; border: 1px solid #2c221c; background: #5a4a41; }
.brush-btn svg { width: 20px; height: 20px; }
input[type="text"] { width: 44px; height: 16px; margin-left: 4px; padding: 0 2px; border: 1px solid #2c221c; background: #fff; color: #222; font: 9px "DejaVu Sans", sans-serif; }
.expander { height: 22px; gap: 7px; padding-left: 4px; }
.expander::before { content: ""; border-left: 6px solid #f4eee4; border-top: 5px solid transparent; border-bottom: 5px solid transparent; }
.check { display: flex; align-items: center; gap: 5px; height: 21px; padding-left: 2px; white-space: nowrap; }
.check input { appearance: none; flex: none; width: 9px; height: 9px; margin: 0; border: 1px solid #241c18; background: #54463d; }
.hscroll { flex: none; display: flex; height: 11px; margin-left: 5px; background: #2a221e; }
.hscroll button { width: 11px; justify-content: center; background: #54463d; }
.hscroll button::before { content: ""; border-right: 4px solid #2a211c; border-top: 3px solid transparent; border-bottom: 3px solid transparent; }
.thumb {
  width: 47px;
  background:
    repeating-linear-gradient(90deg, #7a4818 0 1px, transparent 1px 3px) center / 7px 4px no-repeat,
    linear-gradient(#f4b474, #d8843c);
}

/* Bottom panel */
.taskbar { flex: none; display: flex; align-items: center; height: 18px; padding: 0 1px; background: #6888c8; color: #e8e8ec; }
.show-desktop { width: 17px; height: 16px; justify-content: center; background: #4a3a32; border: 1px solid #241c18; }
.taskbar .grip { margin: 0 5px 0 3px; }
.tasks { flex: 1; min-width: 0; display: flex; }
.task { flex: 0 0 20%; min-width: 0; height: 16px; gap: 7px; padding-left: 3px; }
.task.active { background: #3a302b; border: 1px solid #1e1814; border-radius: 2px; }
.pager { display: flex; height: 18px; background: #241f1c; }
.pager button { width: 22px; height: 18px; justify-content: center; }
.pager .current { background: #7a5230; }
.pager span { width: 15px; height: 11px; background: #e09048; border: 1px solid #f8e8d0; }
.bin { margin-left: 2px; }
```
